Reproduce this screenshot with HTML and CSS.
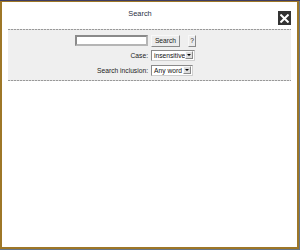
FILE: index.html
```html
<!DOCTYPE html>
<html>
<head>
<meta charset="utf-8">
<link rel="stylesheet" href="styles.css">
</head>
<body>
<div class="dialog">
  <div class="header">
    <div class="title">Search</div>
    <div class="close"><svg width="9" height="9" viewBox="0 0 9 9"><path d="M1.2 1.2 L7.8 7.8 M7.8 1.2 L1.2 7.8" stroke="#fff" stroke-width="2" stroke-linecap="square"/></svg></div>
  </div>
  <div class="panel">
    <div class="form">
      <div class="cell right"><span class="input"></span></div>
      <div class="cell left"><span class="btn">Search</span><span class="btn q">?</span></div>
      <div class="cell right label">Case:</div>
      <div class="cell left"><span class="select s1">insensitive<span class="arrow"></span></span></div>
      <div class="cell right label">Search inclusion:</div>
      <div class="cell left"><span class="select s2">Any word<span class="arrow"></span></span></div>
    </div>
  </div>
</div>
</body>
</html>
```
FILE: styles.css
```css
html, body {
  margin: 0;
  padding: 0;
}
body {
  width: 300px;
  height: 250px;
  background: #667689;
  border-top: 1px solid #3e3c62;
  box-sizing: border-box;
  font-family: "Liberation Sans", Tahoma, sans-serif;
  color: #222;
}
.dialog {
  width: 299px;
  height: 248px;
  box-sizing: border-box;
  border: 2px solid #9e7727;
  border-top-width: 1px;
  background: #fff;
}
.header {
  display: flex;
  align-items: flex-start;
  height: 27px;
}
.title {
  flex: 1;
  text-align: center;
  font-size: 7.4px;
  padding-top: 7px;
  color: #2a2f45;
}
.close {
  width: 13px;
  height: 14px;
  background: #333;
  margin-top: 9px;
  margin-right: 6px;
  display: flex;
  align-items: center;
  justify-content: center;
}
.close svg { display: block; }
.panel {
  margin: 0 6px;
  height: 52px;
  background-color: #efefef;
  background-image:
    repeating-linear-gradient(to right, #999 0 2px, #d8d8d8 2px 3px),
    repeating-linear-gradient(to right, #999 0 2px, #d8d8d8 2px 3px);
  background-size: 100% 1px, 100% 1px;
  background-position: 0 0, 0 100%;
  background-repeat: no-repeat;
  padding: 5px 0 0 67px;
  box-sizing: border-box;
}
.form {
  display: grid;
  grid-template-columns: auto auto;
  column-gap: 2px;
  row-gap: 2px;
  justify-content: start;
  font-size: 6.7px;
}
.cell {
  display: flex;
  align-items: center;
  height: 13px;
}
.right { justify-content: flex-end; }
.left { justify-content: flex-start; }
.label { color: #222; }
.input {
  display: block;
  width: 73px;
  height: 11px;
  box-sizing: border-box;
  border: 2px solid #8a8a8a;
  border-right-color: #b5b5b5;
  border-bottom-color: #b5b5b5;
  background: #fff;
}
.btn {
  display: flex;
  align-items: center;
  justify-content: center;
  height: 12px;
  width: 29px;
  box-sizing: border-box;
  background: #ececec;
  border: 1px solid #f8f8f8;
  border-right-color: #8a8a8a;
  border-bottom-color: #8a8a8a;
  color: #222;
  margin-left: 1px;
}
.btn.q {
  width: 8px;
  margin-left: 8px;
}
.select {
  position: relative;
  display: flex;
  align-items: center;
  height: 11px;
  box-sizing: border-box;
  border: 1px solid #8a8a8a;
  border-right-color: #cfcfcf;
  border-bottom-color: #cfcfcf;
  background: #fff;
  padding-left: 2px;
  color: #111;
  margin-left: 1px;
}
.s1 { width: 44px; }
.s2 { width: 42px; }
.arrow {
  position: absolute;
  right: 1px;
  top: 0;
  width: 8px;
  height: 8px;
  box-sizing: border-box;
  background: #dedede;
  border: 1px solid #fafafa;
  border-right-color: #888;
  border-bottom-color: #888;
}
.arrow::after {
  content: "";
  position: absolute;
  left: 1px;
  top: 2px;
  border-left: 2px solid transparent;
  border-right: 2px solid transparent;
  border-top: 2px solid #000;
}
```
